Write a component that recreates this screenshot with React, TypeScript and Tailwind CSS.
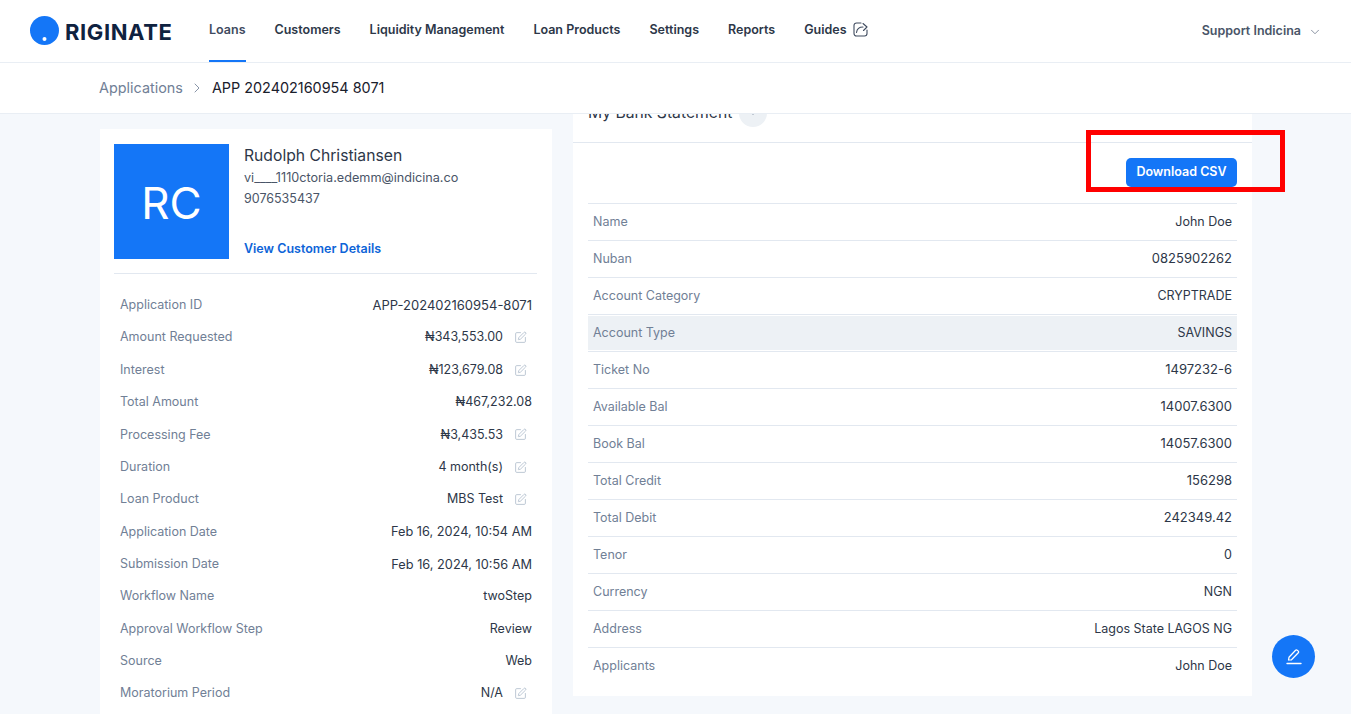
import React from "react";
import { ChevronDown, ChevronRight, SquarePen } from "lucide-react";

const nav = ["Loans", "Customers", "Liquidity Management", "Loan Products", "Settings", "Reports"];

const left: [string, string, boolean][] = [
  ["Application ID", "APP-202402160954-8071", false],
  ["Amount Requested", "₦343,553.00", true],
  ["Interest", "₦123,679.08", true],
  ["Total Amount", "₦467,232.08", false],
  ["Processing Fee", "₦3,435.53", true],
  ["Duration", "4 month(s)", true],
  ["Loan Product", "MBS Test", true],
  ["Application Date", "Feb 16, 2024, 10:54 AM", false],
  ["Submission Date", "Feb 16, 2024, 10:56 AM", false],
  ["Workflow Name", "twoStep", false],
  ["Approval Workflow Step", "Review", false],
  ["Source", "Web", false],
  ["Moratorium Period", "N/A", true],
];

const right: [string, string][] = [
  ["Name", "John Doe"],
  ["Nuban", "0825902262"],
  ["Account Category", "CRYPTRADE"],
  ["Account Type", "SAVINGS"],
  ["Ticket No", "1497232-6"],
  ["Available Bal", "14007.6300"],
  ["Book Bal", "14057.6300"],
  ["Total Credit", "156298"],
  ["Total Debit", "242349.42"],
  ["Tenor", "0"],
  ["Currency", "NGN"],
  ["Address", "Lagos State LAGOS NG"],
  ["Applicants", "John Doe"],
];

const valueSize = (v: string) => {
  if (v.startsWith("Feb")) return "text-[12.75px]";
  if (/^(APP-|\d{3,})/.test(v)) return "text-[13px]";
  return "text-[12.5px]";
};

export default function App() {
  return (
    <div className="relative h-[714px] overflow-hidden bg-[#f5f8fc] font-['Inter',sans-serif] text-[12.5px]">
      <header className="relative z-20 flex h-[63px] items-stretch border-b border-[#e9eef4] bg-white pl-[30px] pr-[29px]">
        <div className="flex w-[179px] items-center">
          <svg width="29" height="29" viewBox="0 0 29 29" className="mt-[-1px] shrink-0">
            <circle cx="14.5" cy="14.5" r="14.5" fill="#1476f7" />
            <circle cx="14.5" cy="23" r="2" fill="#fff" />
          </svg>
          <span className="ml-[6px] mt-[2px] text-[22px] leading-none font-bold tracking-[0.6px] text-[#0f2240]">RIGINATE</span>
        </div>
        <nav className="flex gap-[29px]">
          {nav.map((n, i) => (
            <div key={n} className={`flex h-[62px] items-center border-b-2 font-semibold ${i === 0 ? "border-[#1476f7] text-[#3f4b5f]" : "border-transparent text-[#2d3748]"}`}>
              <span className="mt-[1px]">{n}</span>
            </div>
          ))}
          <div className="flex h-[62px] items-center gap-[6px] border-b-2 border-transparent font-semibold text-[#2d3748]">
            <span className="mt-[1px]">Guides</span>
            <svg width="15" height="15" viewBox="0 0 15 15" fill="none" stroke="#3f4b5f" strokeWidth="1.1" strokeLinecap="round" strokeLinejoin="round" className="mt-[-1px]">
              <path d="M8 1H3.5A2.5 2.5 0 0 0 1 3.5v8A2.5 2.5 0 0 0 3.5 14h8a2.5 2.5 0 0 0 2.5-2.5V8" />
              <path d="M3.5 10.5C4 7 6.5 5 10 5" />
              <path d="M10 1.5 14 5l-3.5 3.5" />
            </svg>
          </div>
        </nav>
        <div className="ml-auto flex items-center gap-[7px] font-semibold text-[#4a5568]">
          <span className="mt-[1px]">Support Indicina</span>
          <ChevronDown size={14} strokeWidth={1.25} className="mt-[1px] text-[#5f6c80]" />
        </div>
      </header>

      <div className="relative z-20 flex h-[51px] items-center border-b border-[#e9eef4] bg-white pl-[99px] text-[14.4px]">
        <span className="text-[#718096]">Applications</span>
        <ChevronRight size={16} strokeWidth={1.25} className="ml-[6px] mr-[7px] text-[#718096]" />
        <span className="text-[#1a202c]">APP 202402160954 8071</span>
      </div>

      <main className="flex items-start pl-[100px]">
        <section className="mt-[15px] w-[452px] shrink-0 bg-white pl-[14px] pr-[15px] pt-[15px] pb-[20px]">
          <div className="flex border-b border-[#e2e8f0] pb-[14px]">
            <div className="flex h-[115px] w-[115px] shrink-0 items-center justify-center bg-[#1476f7] pt-[3px] text-[44px] text-white">RC</div>
            <div className="ml-[15px] flex flex-col">
              <div className="mt-[2px] text-[15.7px] leading-[20px] text-[#2d3748]">Rudolph Christiansen</div>
              <div className="mt-[1px] text-[12.65px] leading-[21px] text-[#4a5568]">vi____1110ctoria.edemm@indicina.co</div>
              <div className="leading-[21px] text-[#4a5568]">9076535437</div>
              <div className="mt-auto font-semibold text-[#0d64d8]">View Customer Details</div>
            </div>
          </div>
          <div className="pl-[6px] pr-[5px] pt-[15.3px]">
            {left.map(([k, v, edit]) => (
              <div key={k} className="flex h-[32.36px] items-center justify-between">
                <span className="text-[#718096]">{k}</span>
                <span className={`flex items-center text-[#2d3748] ${valueSize(v)}`}>
                  {v}
                  {edit && (
                    <span className="flex w-[29px] justify-end pr-[5px]">
                      <SquarePen size={13} strokeWidth={1.35} className="text-[#a5b3c4]" />
                    </span>
                  )}
                </span>
              </div>
            ))}
          </div>
        </section>

        <section className="mt-[-29px] ml-[21px] w-[679px] shrink-0 bg-white">
          <div className="flex h-[58px] items-center gap-[7px] border-b border-[#e2e8f0] px-[15px] pb-[1px] text-[15.7px] text-[#2d3748]">
            <span>My Bank Statement</span>
            <span className="mt-[-1px] flex h-[28px] w-[28px] items-center justify-center rounded-full bg-[#edf1f5]">
              <svg width="4" height="4" viewBox="0 0 4 4" className="mt-[3px]">
                <circle cx="2" cy="2" r="0.8" fill="#8a97a8" />
              </svg>
            </span>
          </div>
          <div className="flex justify-end px-[15px] pt-[15px] pb-[16px]">
            <button className="flex h-[29px] w-[111px] items-center justify-center rounded-[5px] bg-[#1476f7] font-semibold text-white">Download CSV</button>
          </div>
          <div className="mx-[15px] pb-[12px]">
            {right.map(([k, v], i) => (
              <div key={k} className="h-[37px] border-t border-[#e2e8f0] pt-[1px] pb-[1px]">
                <div className={`flex h-[34px] items-center justify-between px-[5px] ${i === 3 ? "bg-[#edf1f5]" : ""}`}>
                  <span className="text-[#718096]">{k}</span>
                  <span className={`text-[#2d3748] ${valueSize(v)}`}>{v}</span>
                </div>
              </div>
            ))}
          </div>
        </section>
      </main>

      <div className="absolute top-[130px] left-[1086px] z-30 h-[62px] w-[199px] border-[5px] border-[#ff0000]" />

      <button className="absolute top-[635px] left-[1272px] z-30 flex h-[43px] w-[43px] items-center justify-center rounded-full bg-[#1476f7]">
        <svg width="16" height="17" viewBox="0 0 16 17" fill="none" stroke="#fff" strokeWidth="1.25" strokeLinecap="round" strokeLinejoin="round">
          <path d="M2.5 12 3 9.3 9.6 2.2a1.2 1.2 0 0 1 1.7 0l1 .9a1.2 1.2 0 0 1 0 1.7L5.5 11.8z" />
          <path d="M1 15.5h14" strokeWidth="1.4" />
        </svg>
      </button>
    </div>
  );
}
